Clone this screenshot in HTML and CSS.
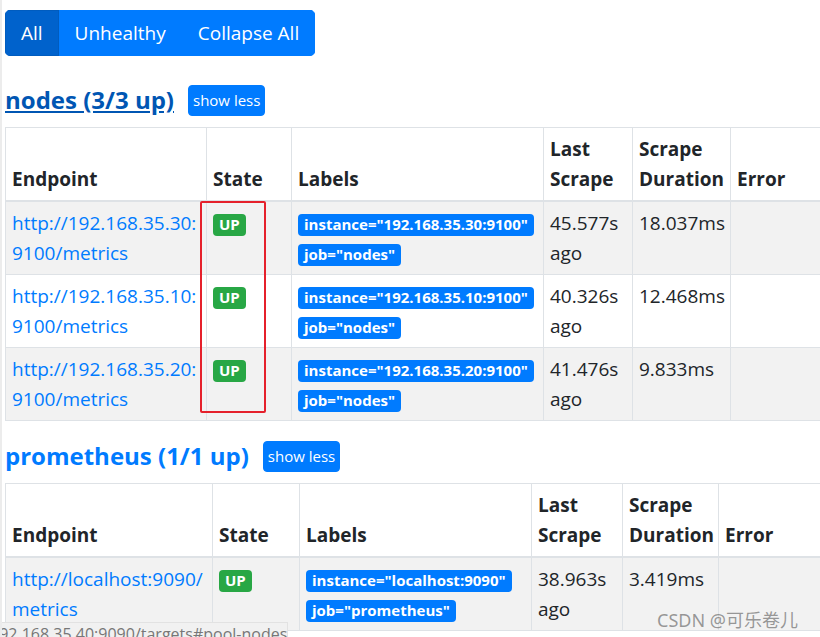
FILE: index.html
```html
<!DOCTYPE html>
<html>
<head>
<meta charset="utf-8">
<link rel="stylesheet" href="styles.css">
</head>
<body>
<div class="page">
  <div class="btn-group">
    <button class="btn active">All</button>
    <button class="btn">Unhealthy</button>
    <button class="btn">Collapse All</button>
  </div>

  <div class="pool-head first">
    <a class="pool-title hover" href="#pool-nodes">nodes (3/3 up)</a>
    <button class="btn-sm">show less</button>
  </div>
  <table class="targets t1">
    <colgroup>
      <col class="c-end"><col class="c-state"><col class="c-labels"><col class="c-last"><col class="c-dur"><col class="c-err">
    </colgroup>
    <thead>
      <tr><th>Endpoint</th><th>State</th><th>Labels</th><th>Last Scrape</th><th>Scrape Duration</th><th>Error</th></tr>
    </thead>
    <tbody>
      <tr class="odd">
        <td><a href="#">http://192.168.35.30:<wbr>9100/metrics</a></td>
        <td><span class="badge up">UP</span></td>
        <td><span class="badge label">instance="192.168.35.30:9100"</span><br><span class="badge label">job="nodes"</span></td>
        <td>45.577s ago</td>
        <td>18.037ms</td>
        <td></td>
      </tr>
      <tr>
        <td><a href="#">http://192.168.35.10:<wbr>9100/metrics</a></td>
        <td><span class="badge up">UP</span></td>
        <td><span class="badge label">instance="192.168.35.10:9100"</span><br><span class="badge label">job="nodes"</span></td>
        <td>40.326s ago</td>
        <td>12.468ms</td>
        <td></td>
      </tr>
      <tr class="odd">
        <td><a href="#">http://192.168.35.20:<wbr>9100/metrics</a></td>
        <td><span class="badge up">UP</span></td>
        <td><span class="badge label">instance="192.168.35.20:9100"</span><br><span class="badge label">job="nodes"</span></td>
        <td>41.476s ago</td>
        <td>9.833ms</td>
        <td></td>
      </tr>
    </tbody>
  </table>

  <div class="pool-head">
    <a class="pool-title" href="#pool-prometheus">prometheus (1/1 up)</a>
    <button class="btn-sm">show less</button>
  </div>
  <table class="targets t2">
    <colgroup>
      <col class="c-end"><col class="c-state"><col class="c-labels"><col class="c-last"><col class="c-dur"><col class="c-err">
    </colgroup>
    <thead>
      <tr><th>Endpoint</th><th>State</th><th>Labels</th><th>Last Scrape</th><th>Scrape Duration</th><th>Error</th></tr>
    </thead>
    <tbody>
      <tr class="odd">
        <td><a href="#">http://localhost:9090/<wbr>metrics</a></td>
        <td><span class="badge up">UP</span></td>
        <td><span class="badge label">instance="localhost:9090"</span><br><span class="badge label">job="prometheus"</span></td>
        <td>38.963s ago</td>
        <td>3.419ms</td>
        <td></td>
      </tr>
    </tbody>
  </table>
</div>

<div class="highlight"></div>
<div class="statusbar"><span>192.168.35.40:9090/targets#pool-nodes</span></div>
<div class="watermark">CSDN @可乐卷儿</div>
</body>
</html>
```

FILE: styles.css
```css
html, body {
  margin: 0;
  padding: 0;
  overflow: hidden;
  background: #fff;
}
body {
  font-family: "Segoe UI", "Open Sans", "Noto Sans", sans-serif;
  font-size: 19px;
  line-height: 30px;
  color: #212529;
  width: 820px;
  height: 637px;
  position: relative;
  border-left: 2px solid #ececec;
  box-sizing: border-box;
}
.page {
  padding: 10px 0 0 3px;
  width: 1000px;
}
.btn-group {
  display: inline-flex;
  border-radius: 5px;
  overflow: hidden;
  margin-bottom: 9px;
}
.btn {
  font-family: inherit;
  font-size: 19px;
  line-height: 30px;
  color: #fff;
  background: #007bff;
  border: 1px solid #007bff;
  padding: 7px 15px;
  margin: 0;
}
.btn.active {
  background: #0062cc;
  border-color: #005cbf;
}
.pool-head {
  display: flex;
  align-items: center;
  height: 31px;
  margin: 20px 0 11px;
}
.pool-title {
  font-size: 24px;
  font-weight: 700;
  color: #007bff;
  text-decoration: none;
  line-height: 30px;
  margin-right: 14px;
  margin-top: -2px;
}
.pool-title.hover {
  color: #0056b3;
  text-decoration: underline;
}
.btn-sm {
  font-family: inherit;
  font-size: 15px;
  line-height: 21px;
  color: #fff;
  background: #007bff;
  border: 1px solid #007bff;
  border-radius: 4px;
  padding: 0 4px;
  height: 31px;
}
.targets {
  border-collapse: collapse;
  table-layout: fixed;
  border: 1px solid #dee2e6;
}
.t1 { width: 925px; }
.t2 { width: 925px; }
.t1 .c-end { width: 201px; }
.t1 .c-state { width: 85px; }
.t1 .c-labels { width: 252px; }
.t1 .c-last { width: 89px; }
.t1 .c-dur { width: 98px; }
.t2 .c-end { width: 207px; }
.t2 .c-state { width: 87px; }
.t2 .c-labels { width: 232px; }
.t2 .c-last { width: 91px; }
.t2 .c-dur { width: 96px; }
.targets th,
.targets td {
  border: 1px solid #dee2e6;
  padding: 6px 6px;
  text-align: left;
  vertical-align: top;
}
.targets th {
  font-weight: 700;
  vertical-align: bottom;
  border-bottom: 2px solid #dee2e6;
}
.targets tr.odd td {
  background: #f2f2f2;
}
.targets a {
  color: #007bff;
  text-decoration: none;
}
.badge {
  display: inline-block;
  font-size: 15px;
  font-weight: 700;
  line-height: 1;
  padding: 3px 6px 4px;
  border-radius: 4px;
  color: #fff;
  vertical-align: 0;
  white-space: nowrap;
}
.badge.up {
  background: #28a745;
}
.badge.label {
  background: #007bff;
}
.highlight {
  position: absolute;
  left: 198px;
  top: 201px;
  width: 62px;
  height: 208px;
  border: 2px solid #e5202b;
  border-radius: 2px;
}
.statusbar {
  position: absolute;
  left: -2px;
  top: 622px;
  width: 287px;
  height: 20px;
  background: #f1f1f1;
  border-top: 1px solid #e2e2e2;
  border-right: 1px solid #e2e2e2;
  overflow: hidden;
  font-size: 16px;
  line-height: 20px;
  color: #777;
  white-space: nowrap;
}
.statusbar span {
  display: block;
  margin-left: -10px;
  margin-top: 1px;
}
.watermark {
  position: absolute;
  left: 655px;
  top: 605px;
  font-family: "Noto Sans", "Noto Sans CJK SC", sans-serif;
  font-size: 18px;
  line-height: 30px;
  color: rgba(120, 120, 120, 0.75);
  white-space: nowrap;
}
```
